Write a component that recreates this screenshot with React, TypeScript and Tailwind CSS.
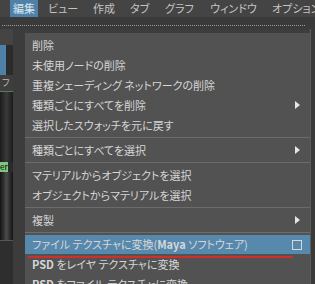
import React from "react";

type Item =
  | { kind: "item"; label: React.ReactNode; arrow?: boolean; box?: boolean; active?: boolean }
  | { kind: "sep" };

const items: Item[] = [
  { kind: "item", label: "削除" },
  { kind: "item", label: "未使用ノードの削除" },
  { kind: "item", label: "重複シェーディング ネットワークの削除" },
  { kind: "item", label: "種類ごとにすべてを削除", arrow: true },
  { kind: "item", label: "選択したスウォッチを元に戻す" },
  { kind: "sep" },
  { kind: "item", label: "種類ごとにすべてを選択", arrow: true },
  { kind: "sep" },
  { kind: "item", label: "マテリアルからオブジェクトを選択" },
  { kind: "item", label: "オブジェクトからマテリアルを選択" },
  { kind: "sep" },
  { kind: "item", label: "複製", arrow: true },
  { kind: "sep" },
  {
    kind: "item",
    label: (
      <>
        ファイル テクスチャに変換(<b className="font-bold">Maya</b> ソフトウェア)
      </>
    ),
    box: true,
    active: true,
  },
  {
    kind: "item",
    label: (
      <>
        <b className="font-bold">PSD</b> をレイヤ テクスチャに変換
      </>
    ),
  },
  {
    kind: "item",
    label: (
      <>
        <b className="font-bold">PSD</b> をファイル テクスチャに変換
      </>
    ),
  },
];

// width of each menubar slot, start to start
const tabs = [
  { t: "編集", w: "w-[36px]" },
  { t: "ビュー", w: "w-[45px]" },
  { t: "作成", w: "w-[37px]" },
  { t: "タブ", w: "w-[35px]" },
  { t: "グラフ", w: "w-[45px]" },
  { t: "ウィンドウ", w: "w-[62px]" },
  { t: "オプション", w: "w-[60px]" },
];

function MenuRow({ item }: { item: Extract<Item, { kind: "item" }> }) {
  return (
    <div
      className={`relative flex items-center shrink-0 pl-[7px] pr-[8px] ${
        item.active ? "bg-[#5789ad] h-[19px]" : "h-[20px]"
      }`}
    >
      <span className="flex-1 min-w-0 whitespace-nowrap">{item.label}</span>
      {item.arrow && (
        <svg width="5" height="8" viewBox="0 0 5 8" className="mr-[2px]">
          <path d="M0 0 L5 4 L0 8 Z" fill="#e6e6e6" />
        </svg>
      )}
      {item.box && <div className="w-[10px] h-[10px] border border-[#d8d8d8]" />}
      {item.active && (
        <div className="absolute left-[3px] bottom-[-4px] w-[265px] h-[2px] bg-[#d0302c] rounded-full" />
      )}
    </div>
  );
}

export default function App() {
  return (
    <div
      className="w-[315px] h-[284px] overflow-hidden bg-[#3d3d3d] flex flex-col text-[11px] text-[#d6d6d6] [font-feature-settings:'palt']"
      style={{ fontFamily: '"Noto Sans CJK JP", "Noto Sans", sans-serif' }}
    >
      {/* menubar */}
      <div className="h-[17px] shrink-0 bg-[#444444] flex items-center pl-[10px] whitespace-nowrap text-[#c4c4c4]">
        {tabs.map((t, i) => (
          <div key={t.t} className={`${t.w} shrink-0 flex`}>
            <span
              className={`h-[17px] flex items-center px-[2px] ${i === 0 ? "bg-[#4f81a8] text-[#dce6ee] px-[3px]" : ""}`}
            >
              {t.t}
            </span>
          </div>
        ))}
      </div>
      {/* toolbar strip */}
      <div className="h-[12px] shrink-0 bg-[#3a3a3a] flex items-center pl-[2px] pr-[10px] pt-[4px]">
        <div className="flex-1 h-[1px] border-t border-dotted border-[#9a9a9a]" />
      </div>
      <div className="flex-1 flex min-h-0">
        {/* left panels behind menu */}
        <div className="w-[13px] shrink-0 flex flex-col bg-[#2b2b2b]">
          <div className="h-[16px] bg-[#444]" />
          <div className="h-[30px] w-[6px] bg-[#4f81a8]" />
          <div className="h-[16px] bg-[#3e3e3e] text-[9px] leading-[16px] text-[#bbb] pl-[2px]">フ</div>
          <div className="h-[1px] bg-[#5a7a5a]" />
          <div className="h-[70px] bg-gradient-to-r from-[#1c1c1c] via-[#3a3a3a] to-[#1c1c1c]" />
          <div className="h-[10px] w-[8px] bg-[#7fc77f] text-[8px] leading-[10px] text-black">er</div>
          <div className="h-[68px] bg-gradient-to-r from-[#151515] via-[#4a4a4a] to-[#151515]" />
          <div className="h-[1px] bg-[#555]" />
          <div className="flex-1 bg-[#2e2e2e]" />
        </div>
        <div className="w-[12px] shrink-0 bg-[#3c3c3c]" />
        {/* popup menu */}
        <div className="w-[285px] shrink-0 mt-[4px] bg-[#525252] flex flex-col pt-[2px]">
          {items.map((it, i) =>
            it.kind === "sep" ? (
              <div key={i} className="h-[5px] shrink-0 flex items-center">
                <div className="w-full h-[1px] bg-[#6c6c6c]" />
              </div>
            ) : (
              <MenuRow key={i} item={it} />
            )
          )}
        </div>
        <div className="w-[1px] shrink-0 bg-[#5c5c5c]" />
        <div className="flex-1 bg-[#3a3a3a]" />
      </div>
    </div>
  );
}
